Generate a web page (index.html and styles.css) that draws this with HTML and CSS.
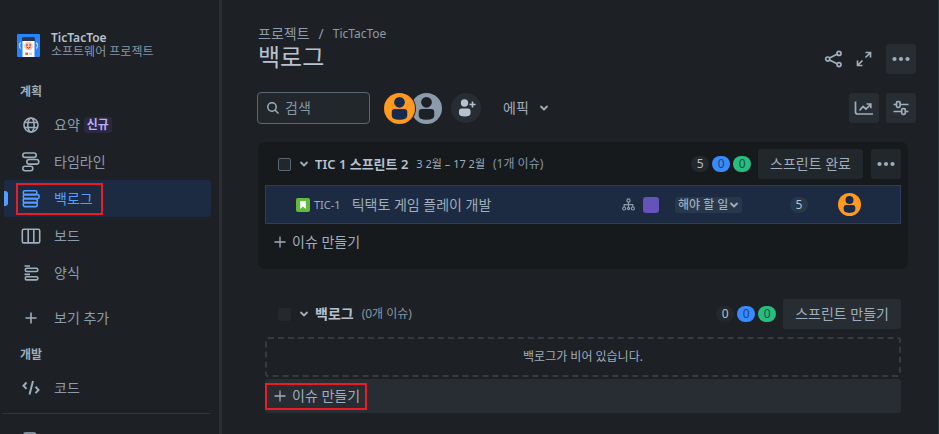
FILE: index.html
```html
<!DOCTYPE html>
<html lang="ko">
<head>
<meta charset="utf-8">
<meta name="viewport" content="width=device-width, initial-scale=1">
<title>백로그 - TicTacToe</title>
<link rel="stylesheet" href="styles.css">
</head>
<body>
<svg class="defs" aria-hidden="true">
  <symbol id="chevron" viewBox="0 0 10 10"><path d="M2 3.500 5 6.500 8 3.500" fill="none" stroke="currentColor" stroke-width="1.800" stroke-linecap="round" stroke-linejoin="round"/></symbol>
  <symbol id="plus" viewBox="0 0 12 12"><path d="M6 .5v11M.5 6h11" fill="none" stroke="currentColor" stroke-width="1.300"/></symbol>
  <symbol id="dots" viewBox="0 0 18 6"><g fill="currentColor"><circle cx="2.500" cy="3" r="2.100"/><circle cx="9" cy="3" r="2.100"/><circle cx="15.500" cy="3" r="2.100"/></g></symbol>
  <symbol id="person" viewBox="0 0 30 30"><circle cx="15" cy="9" r="5.200"/><path d="M7.500 18.500Q7.500 15.500 10.500 15.500H19.500Q22.500 15.500 22.500 18.500V22Q22.500 26 15 26T7.500 22Z"/></symbol>
</svg>
<div class="app">
  <aside class="sidebar">
    <header class="project">
      <svg class="logo" viewBox="0 0 23 23" aria-hidden="true">
        <rect width="23" height="23" rx="1" fill="#2684ff"/>
        <path d="M4 9Q2.500 9 2.500 11.500T4 14.500M19 9Q20.500 9 20.500 11.500T19 14.500" fill="none" stroke="#b3d4ff" stroke-width="1.300"/>
        <path d="M5.500 6H17.500V23H5.500Z" fill="#fff"/>
        <path d="M5 7V4.500Q5 3 7 3H16Q18 3 18 4.500V7Z" fill="#253858"/>
        <circle cx="11.500" cy="12" r="4.300" fill="#ffbdad"/>
        <path d="M9.500 13Q11.500 15.500 13.500 13" fill="none" stroke="#bf2600" stroke-width="1"/>
        <circle cx="9.900" cy="11" r=".7" fill="#253858"/><circle cx="13.100" cy="11" r=".7" fill="#253858"/>
        <path d="M8.300 18.500h2.600v2.500H8.300z" fill="#ff5630"/><path d="M12.200 18.500h2.600v2.500h-2.600z" fill="#b3d4ff"/>
      </svg>
      <div>
        <strong class="project-name">TicTacToe</strong>
        <span class="project-type">소프트웨어 프로젝트</span>
      </div>
    </header>
    <nav>
      <h2 class="nav-title">계획</h2>
      <a class="nav-item" href="#summary"><svg viewBox="0 0 20 20"><circle cx="10" cy="10" r="7"/><ellipse cx="10" cy="10" rx="3.200" ry="7"/><path d="M3.500 7.500h13M3.500 12.500h13"/></svg><span>요약</span><b class="new">신규</b></a>
      <a class="nav-item" href="#timeline"><svg viewBox="0 0 20 20"><rect x="1.800" y="1" width="13.400" height="4.400" rx="2.200"/><rect x="5.800" y="7.500" width="12" height="4.600" rx="2.300"/><rect x="1.800" y="14.300" width="10" height="4.400" rx="2.200"/></svg><span>타임라인</span></a>
      <a class="nav-item current" href="#backlog" aria-current="page"><svg viewBox="0 0 20 20"><rect x="2.300" y="1.800" width="13.500" height="3.800" rx="1.500"/><rect x="2.300" y="5.600" width="15.800" height="4" rx="1.500"/><rect x="2.300" y="9.600" width="14" height="4" rx="1"/><rect x="2.300" y="13.600" width="14" height="4" rx="1.500"/></svg><span>백로그</span></a>
      <a class="nav-item" href="#board"><svg viewBox="0 0 20 20"><rect x="1.300" y="3.300" width="17.400" height="13.600" rx="1.500"/><path d="M7.200 3.500v13M12.800 3.500v13"/></svg><span>보드</span></a>
      <a class="nav-item" href="#forms"><svg viewBox="0 0 20 20"><path d="M3.500 3h5.500M3.500 11.400h5.500"/><rect x="4.300" y="5.300" width="12.500" height="3.200" rx="1.400"/><rect x="4.300" y="13.700" width="12.500" height="3.200" rx="1.400"/></svg><span>양식</span></a>
      <a class="nav-item add-view" href="#add"><svg viewBox="0 0 20 20"><path d="M10 4.500v11M4.500 10h11"/></svg><span>보기 추가</span></a>
      <h2 class="nav-title dev">개발</h2>
      <a class="nav-item" href="#code"><svg viewBox="0 0 20 20"><path d="M5.500 4.500 2.500 7.700 5.500 10.900M12 3 8.500 16.500M14.500 8.700 17.500 11.900 14.500 15.100" stroke-width="2"/></svg><span>코드</span></a>
      <hr>
      <a class="nav-item" href="#pages" aria-label="페이지"><svg viewBox="0 0 20 20"><rect x="3" y="1" width="11.500" height="17" rx="1.500"/></svg></a>
    </nav>
  </aside>
  <main>
    <header class="page-head">
      <div>
        <nav class="crumbs"><a href="#projects">프로젝트</a><span>/</span><a href="#project">TicTacToe</a></nav>
        <h1>백로그</h1>
      </div>
      <div class="actions">
        <button class="plain" aria-label="공유"><svg viewBox="0 0 20 20" class="line"><path d="M5.500 9 13 5.300M5.500 11l7.500 3.700"/><circle cx="3.700" cy="10" r="2"/><circle cx="15" cy="4.400" r="2"/><circle cx="15" cy="15.600" r="2"/></svg></button>
        <button class="plain" aria-label="전체 화면"><svg viewBox="0 0 20 20" class="line"><path d="M11.500 8.500 16.500 3.500M11.500 3.500h5v5M8.500 11.500 3.500 16.500M3.500 11.500v5h5"/></svg></button>
        <button class="square last" aria-label="더 보기"><svg class="dots"><use href="#dots"/></svg></button>
      </div>
    </header>
    <div class="toolbar">
      <label class="search"><svg viewBox="0 0 14 14" class="line"><circle cx="6" cy="6" r="4.200"/><path d="M9 9l3.500 3.500"/></svg><input type="search" placeholder="검색" aria-label="검색"></label>
      <div class="people">
        <button class="face orange" aria-label="담당자"><svg><use href="#person"/></svg></button>
        <button class="face grey" aria-label="할당되지 않음"><svg><use href="#person"/></svg></button>
      </div>
      <button class="face invite" aria-label="사람 추가"><svg viewBox="0 0 30 30"><circle cx="13.500" cy="10" r="3.700"/><path d="M8 18Q8 15.500 10.500 15.500H17Q19.500 15.500 19.500 18V20.500Q19.500 23.500 13.750 23.500T8 20.500Z"/><path d="M21.500 8.500v6M18.500 11.500h6" stroke="#b6c2cf" stroke-width="1.600"/></svg></button>
      <button class="epic">에픽<svg class="chev"><use href="#chevron"/></svg></button>
      <div class="tools">
        <button class="square" aria-label="인사이트"><svg viewBox="0 0 20 20" class="line"><path d="M1.500 3.500V14Q1.500 16 3.500 16H19M5.500 12.500 9 8.500 12 11 16.500 6.500M12.500 6h4.300v4.300"/></svg></button>
        <button class="square" aria-label="보기 설정"><svg viewBox="0 0 20 20" class="line"><path d="M2.500 6.500h3M9.500 6.500h8M2.500 13.500h8M14.500 13.500h3"/><rect x="5.500" y="3.700" width="3.600" height="5.600" rx="1.200"/><rect x="10.700" y="10.700" width="3.600" height="5.600" rx="1.200"/></svg></button>
      </div>
    </div>

    <section class="panel sprint">
      <header class="panel-head">
        <input type="checkbox" aria-label="스프린트 이슈 모두 선택">
        <svg class="chev"><use href="#chevron"/></svg>
        <h2>TIC 1 스프린트 2</h2><span class="dates">3 2월 – 17 2월</span><span class="count">(1개 이슈)</span>
        <div class="badges"><span class="badge">5</span><span class="badge blue">0</span><span class="badge green">0</span></div>
        <button class="btn">스프린트 완료</button>
        <button class="square" aria-label="더 보기"><svg class="dots"><use href="#dots"/></svg></button>
      </header>
      <article class="issue">
        <svg class="story" viewBox="0 0 14 14" aria-hidden="true"><rect width="14" height="14" rx="2" fill="#63ba3c"/><path d="M4.200 3h5.600v8L7 8.500 4.200 11z" fill="#fff"/></svg>
        <a class="key" href="#TIC-1">TIC-1</a>
        <span class="summary">틱택토 게임 플레이 개발</span>
        <svg class="tree" viewBox="0 0 12 12"><circle cx="6" cy="2.300" r="1.500"/><circle cx="2" cy="9.700" r="1.400"/><circle cx="6" cy="9.700" r="1"/><circle cx="10" cy="9.700" r="1.400"/><path d="M6 3.800V8.500M2 8.300V6.200h8v2.100"/></svg>
        <span class="epic-color"></span>
        <span class="status"><select aria-label="상태"><option>해야 할 일</option></select><svg class="chev"><use href="#chevron"/></svg></span>
        <span class="badge points">5</span>
        <span class="face orange small"><svg viewBox="0 0 30 30"><use href="#person" width="30" height="30"/></svg></span>
      </article>
      <button class="create"><svg><use href="#plus"/></svg>이슈 만들기</button>
    </section>

    <section class="panel backlog">
      <header class="panel-head">
        <input type="checkbox" aria-label="백로그 이슈 모두 선택" disabled>
        <svg class="chev"><use href="#chevron"/></svg>
        <h2>백로그</h2><span class="count">(0개 이슈)</span>
        <div class="badges"><span class="badge">0</span><span class="badge blue">0</span><span class="badge green">0</span></div>
        <button class="btn">스프린트 만들기</button>
      </header>
      <p class="empty">백로그가 비어 있습니다.</p>
      <button class="create filled"><span class="mark"><svg><use href="#plus"/></svg>이슈 만들기</span></button>
    </section>
  </main>
</div>
</body>
</html>
```
FILE: styles.css
```css
*, *::before, *::after { box-sizing: border-box; }
body {
  margin: 0;
  background: #1d2125;
  color: #9fadbc;
  font: 14px/20px "Noto Sans", "Noto Sans CJK KR", sans-serif;
}
h1, h2, p { margin: 0; }
a { color: inherit; text-decoration: none; }
button, input, select { font: inherit; color: inherit; }
button { display: flex; align-items: center; justify-content: center; border: 0; padding: 0; background: none; white-space: nowrap; }
svg { display: block; flex: none; }
.defs { position: absolute; width: 0; height: 0; }
.line { fill: none; stroke: currentColor; stroke-width: 1.7; }

.app { display: flex; height: 100vh; overflow: hidden; border-right: 1px solid #2c333a; }

/* Sidebar */
.sidebar { flex: none; width: 222px; border-right: 3px solid #2b2f35; padding: 28px 8px 0 4px; overflow: hidden; }
.project { display: flex; align-items: center; gap: 11px; padding-left: 13px; height: 34px; }
.logo { width: 23px; height: 23px; }
.project-name, .project-type { display: block; line-height: 14px; }
.project-name { font-size: 12px; font-weight: 600; color: #b6c2cf; }
.project-type { font-size: 12px; color: #8696a7; }
.nav-title { padding-left: 16px; font-size: 12px; font-weight: 700; line-height: 18px; }
.project + nav { padding-top: 21px; }
.nav-title + .nav-item { margin-top: 5px; }
.nav-item { position: relative; display: flex; align-items: center; height: 37px; padding-left: 17px; border-radius: 3px; color: #8c9bab; }
.nav-item svg { width: 20px; height: 20px; margin-right: 13px; fill: none; stroke: #9fadbc; stroke-width: 1.6; }
.new { margin-left: 4px; padding: 0 3px; border-radius: 3px; background: #2b273f; color: #b8acf6; font-size: 12px; line-height: 16px; }
.nav-item.current { background: #1c2b41; color: #579dff; }
.nav-item.current svg { stroke: #579dff; }
.current::before { content: ""; position: absolute; left: 0; top: 11px; width: 4px; height: 15px; border-radius: 0 3px 3px 0; background: #579dff; }
.current::after { content: ""; position: absolute; left: 12px; top: 3px; width: 87px; height: 32px; border: 2px solid #ed1c24; }
.add-view { margin-top: 8px; }
.dev { margin-top: 10px; }
hr { height: 1px; margin: 7px 0 9px -2px; border: 0; background: #2f353c; }

/* Page header */
main { flex: 1; min-width: 0; padding: 24px 30px 0 36px; }
.page-head { display: flex; justify-content: space-between; margin-right: -8px; }
.crumbs { display: flex; gap: 9px; color: #8c9bab; }
.crumbs a:last-child { font-size: 12px; }
h1 { font-size: 24px; font-weight: 400; line-height: 26px; color: #b6c2cf; }
.actions { display: flex; align-items: center; padding-top: 24px; height: 46px; }
.plain { width: 30px; height: 30px; }
.plain svg { width: 20px; height: 20px; }
.square { flex: none; width: 30px; height: 30px; border-radius: 3px; background: #282d33; }
.square svg { width: 20px; height: 20px; }
.square .dots { width: 18px; height: 6px; }
.last { margin-left: 7px; }

/* Toolbar */
.toolbar { display: flex; align-items: center; height: 32px; margin: 22px -8px 0 -1px; }
.search { display: flex; align-items: center; gap: 5px; width: 113px; height: 32px; padding: 0 8px; border: 1px solid #596773; border-radius: 4px; background: #22272b; }
.search svg { width: 14px; height: 14px; stroke-width: 1.5; }
.search input { flex: 1; min-width: 0; padding: 0; border: 0; outline: 0; background: none; }
.search input::placeholder { color: #8696a7; opacity: 1; }
.people { display: flex; margin-left: 14px; }
.face { display: block; flex: none; width: 31px; height: 31px; border-radius: 50%; }
.face svg { width: 100%; height: 100%; }
.orange { background: #ff991f; fill: #172b4d; }
.grey { background: #8c9bab; fill: #1d2125; margin-left: -4px; }
.people .orange { position: relative; z-index: 1; box-shadow: 0 0 0 1px #1d2125; }
.invite { width: 30px; height: 30px; margin-left: 9px; background: #282d33; fill: #b6c2cf; }
.epic { gap: 10px; margin-left: 22px; }
.chev { width: 10px; height: 10px; }
.tools { display: flex; gap: 7px; margin-left: auto; }

/* Panels */
.panel { padding: 7px 7px 10px; border-radius: 7px; }
.sprint { margin-top: 18px; background: #161a1d; }
.backlog { margin-top: 23px; }
.panel-head { display: flex; align-items: center; height: 30px; padding-left: 13px; }
.panel-head input { appearance: none; flex: none; width: 13px; height: 13px; margin: 0; border: 1px solid #596773; border-radius: 2px; background: #22272b; }
.panel-head input:disabled { border-color: #25292e; background: #25292e; }
.panel-head > .chev { margin: 0 6px 0 8px; }
main h2 { white-space: nowrap; font-size: 14px; font-weight: 600; color: #b6c2cf; }
.sprint h2 { font-size: 13px; }
.dates, .count { margin-left: 8px; font-size: 12px; white-space: nowrap; }
.dates { font-size: 11px; }
.count { color: #8696a7; }
.badges { display: flex; gap: 3px; margin-left: auto; }
.badge { flex: none; width: 18px; height: 16px; border-radius: 8px; background: #23282d; font-size: 12px; line-height: 16px; text-align: center; color: #b6c2cf; }
.blue { background: #388bff; color: #1d3f78; }
.green { background: #2abb7f; color: #14553c; }
.btn { height: 30px; margin-left: 7px; padding: 0 12px; border-radius: 3px; background: #282d33; }
.btn + .square { margin-left: 8px; }
.sprint .btn, .sprint .square { background: #22272b; }

.issue { display: flex; align-items: center; height: 39px; margin-top: 6px; padding: 0 39px 0 30px; border: 1px solid #2c3f5a; background: #1c2b41; }
.story { width: 14px; height: 14px; }
.key { margin-left: 4px; font-size: 11px; }
.summary { flex: 1; margin-left: 11px; }
.tree { width: 13px; height: 13px; margin-right: 8px; fill: none; stroke: #8c9bab; stroke-width: 1.1; }
.epic-color { width: 16px; height: 16px; border-radius: 3px; background: #6553b9; }
.status { display: flex; align-items: center; height: 16px; margin-left: 16px; padding: 0 3px; border-radius: 3px; background: #29374a; }
.status select { appearance: none; height: 16px; padding: 0; border: 0; background: none; font-size: 12px; line-height: 16px; font-weight: 500; }
.points { margin: 0 30px 0 48px; background: #29374a; }
.small { width: 23px; height: 23px; }
.create { gap: 6px; height: 35px; padding-left: 9px; }
.create svg { width: 12px; height: 12px; }
.empty { margin-top: 8px; height: 40px; border: 2px dashed #353b41; border-radius: 3px; font-size: 12px; line-height: 36px; text-align: center; }
.filled { width: 100%; height: 34px; margin-top: 2px; padding: 0; justify-content: flex-start; border-radius: 3px; background: #282c33; }
.mark { display: flex; align-items: center; gap: 6px; height: 27px; padding: 0 5px 0 7px; border: 2px solid #ed1c24; }
```
